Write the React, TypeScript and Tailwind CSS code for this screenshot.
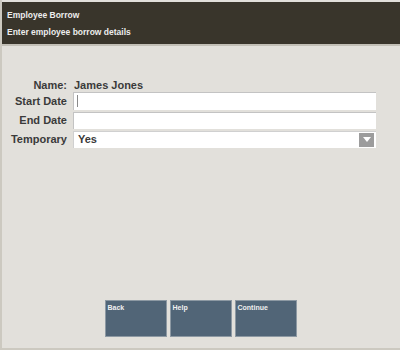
export default function App() {
  const font = { fontFamily: '"Liberation Sans", Arial, sans-serif' };

  return (
    <div
      className="w-[400px] h-[350px] flex flex-col bg-[#e2e0db] border-l-2 border-b-2 border-[#ccc9c0] overflow-hidden"
      style={font}
    >
      {/* Title bar */}
      <div className="mt-[2px] h-[44px] bg-[#39352b] border-b-2 border-[#c2bfb6] px-[5px] pt-[8px] text-[#ededed] text-[8.5px] font-bold leading-[11px]">
        <div>Employee Borrow</div>
        <div className="mt-[6px]">Enter employee borrow details</div>
      </div>

      {/* Form */}
      <div className="mt-[30px] grid grid-cols-[65px_303px] gap-x-[6px] gap-y-[1px] text-[11px] font-bold text-[#3a3a3a] items-center">
        <div className="text-right h-[15px] leading-[19px]">Name:</div>
        <div className="h-[15px] leading-[19px] pl-[1px]">James Jones</div>

        <div className="text-right leading-[18px]">Start Date</div>
        <div className="relative h-[18px] bg-white border-t border-l border-[#c3c3c3]">
          <div className="absolute left-[3px] top-[2px] w-px h-[12px] bg-[#8a8a8a]" />
        </div>

        <div className="text-right leading-[18px]">End Date</div>
        <div className="h-[17px] bg-white border-t border-l border-[#c3c3c3]" />

        <div className="text-right leading-[18px]">Temporary</div>
        <div className="h-[17px] bg-white border-t border-l border-[#d0d0d0] flex items-center justify-between pl-[4px] pr-[2px]">
          <span>Yes</span>
          <div className="w-[15px] h-[14px] bg-[#9c9c9c] flex items-center justify-center">
            <svg width="8" height="5" viewBox="0 0 8 5">
              <path d="M0 0 H8 L4 5 Z" fill="#ffffff" />
            </svg>
          </div>
        </div>
      </div>

      {/* Buttons */}
      <div className="mt-auto mb-[11px] flex justify-center gap-[3px] pr-[1px]">
        {['Back', 'Help', 'Continue'].map((label) => (
          <div
            key={label}
            className="w-[62px] h-[37px] bg-[#516577] border border-[#8d99a3] px-[2px] pt-[2px] text-[7px] font-bold leading-[9px] text-[#f0f0f0]"
          >
            {label}
          </div>
        ))}
      </div>
    </div>
  );
}
